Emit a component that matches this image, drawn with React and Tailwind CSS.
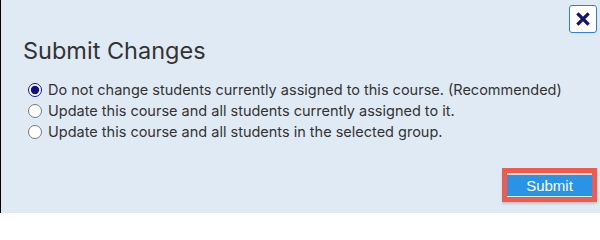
export default function App() {
  const options = [
    'Do not change students currently assigned to this course. (Recommended)',
    'Update this course and all students currently assigned to it.',
    'Update this course and all students in the selected group.',
  ]

  return (
    <div className="w-[600px] h-[213px] bg-[#e0eaf5] border-l border-black flex flex-col text-[#333333]" style={{ fontFamily: 'Inter, "Noto Sans", sans-serif' }}>
      {/* header */}
      <div className="flex justify-end pt-[5px] pr-[3px]">
        <button className="w-[28px] h-[28px] bg-white border border-[#2f7fd6] rounded-[3px] flex items-center justify-center">
          <svg width="14" height="14" viewBox="0 0 14 14">
            <path d="M2.5 2.5 L11.5 11.5 M11.5 2.5 L2.5 11.5" stroke="#14146e" strokeWidth="3.2" strokeLinecap="square" />
          </svg>
        </button>
      </div>

      <h2 className="pl-[22px] mt-[3px] text-[23.5px] leading-[29px] font-normal">Submit Changes</h2>

      <div className="pl-[27px] mt-[14px] flex flex-col">
        {options.map((label, i) => (
          <label key={i} className="flex items-center h-[21px] text-[14.5px]">
            <input type="radio" name="opt" defaultChecked={i === 0} className="w-[14px] h-[14px] m-0 accent-[#10108a]" />
            <span className="ml-[6px]">{label}</span>
          </label>
        ))}
      </div>

      <div className="flex-1" />

      <div className="flex justify-end pr-[3px] pb-[11px]">
        <div className="border-[5px] border-[#f25a4b] shadow-[0_2px_2px_rgba(0,0,0,0.15)]">
          <button className="w-[85px] h-[21px] bg-[#2a93e6] text-white text-[15px] leading-[21px]" style={{ fontFamily: '"Liberation Sans", Arial, sans-serif' }}>
            Submit
          </button>
        </div>
      </div>
    </div>
  )
}
